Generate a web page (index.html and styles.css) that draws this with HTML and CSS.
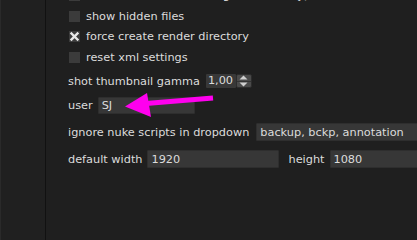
FILE: index.html
```html
<!DOCTYPE html>
<html>
<head>
<meta charset="utf-8">
<link rel="stylesheet" href="styles.css">
</head>
<body>
<div class="window">
  <div class="side"></div>
  <div class="main">
    <div class="row cbrow"><span class="cb"></span><span class="lbl">shot section: enable drag functionality)</span></div>
    <div class="row cbrow"><span class="cb"></span><span class="lbl">show hidden files</span></div>
    <div class="row cbrow"><span class="cb"><svg width="11" height="11" viewBox="0 0 11 11"><path d="M2.5 2.5 L8.5 8.5 M8.5 2.5 L2.5 8.5" stroke="#e8e8e8" stroke-width="2.4" stroke-linecap="square"/></svg></span><span class="lbl">force create render directory</span></div>
    <div class="row cbrow"><span class="cb"></span><span class="lbl">reset xml settings</span></div>
    <div class="row r-gamma"><span class="lbl">shot thumbnail gamma</span>
      <span class="spin"><span class="spinval">1,00</span><span class="spinbtns"><span class="sb"><svg width="9" height="5" viewBox="0 0 9 5"><path d="M4.5 0.5 L8.5 4.5 L0.5 4.5 Z" fill="#cfcfcf"/></svg></span><span class="sb"><svg width="9" height="5" viewBox="0 0 9 5"><path d="M0.5 0.5 L8.5 0.5 L4.5 4.5 Z" fill="#cfcfcf"/></svg></span></span></span>
    </div>
    <div class="row r-user"><span class="lbl">user</span><span class="field f-user">SJ</span></div>
    <div class="row r-ignore"><span class="lbl">ignore nuke scripts in dropdown</span><span class="field f-ignore">backup, bckp, annotation</span></div>
    <div class="row r-width"><span class="lbl">default width</span><span class="field f-width">1920</span><span class="lbl lbl-h">height</span><span class="field f-height">1080</span></div>
  </div>
</div>
<svg class="arrow" width="417" height="240" viewBox="0 0 417 240">
  <path d="M146 103.5 L213 98" stroke="#ff00ee" stroke-width="5" fill="none"/>
  <path d="M125 106.5 L147 93 L151 117 Z" fill="#ff00ee"/>
</svg>
</body>
</html>
```
FILE: styles.css
```css
html, body {
  margin: 0;
  padding: 0;
  background: #1f1f1f;
  overflow: hidden;
}
.window {
  width: 417px;
  height: 240px;
  display: flex;
  font-family: "DejaVu Sans", Verdana, sans-serif;
  font-size: 11.3px;
  color: #dcdcdc;
  overflow: hidden;
}
.side {
  width: 46px;
  flex: none;
  background: #202020;
  border-right: 1px solid #111111;
  border-left: 1px solid #2a2a2a;
  box-sizing: border-box;
}
.main {
  flex: 1;
  display: flex;
  flex-direction: column;
  padding-left: 22px;
  margin-top: -14.5px;
  min-width: 0;
}
.row {
  display: flex;
  align-items: center;
  white-space: nowrap;
  height: 20px;
  flex: none;
}
.cbrow {
  height: 20.5px;
}
.cb {
  width: 11px;
  height: 11px;
  background: #3b3b3b;
  margin: 0 6px 0 1px;
  display: flex;
  flex: none;
}
.lbl {
  line-height: 13px;
}
.r-gamma { margin-top: 3.5px; }
.r-user { margin-top: 4px; }
.r-ignore { margin-top: 7px; }
.r-width { margin-top: 7px; }
.spin {
  display: flex;
  height: 14px;
  margin-left: 6px;
}
.spinval {
  background: #383838;
  width: 30px;
  padding-left: 2px;
  box-sizing: border-box;
  line-height: 14px;
  border-radius: 1px;
}
.spinbtns {
  display: flex;
  flex-direction: column;
  width: 16px;
  background: #4a4a4a;
  border: 1px solid #2c2c2c;
  box-sizing: border-box;
  border-radius: 2px;
}
.sb {
  flex: 1;
  display: flex;
  align-items: center;
  justify-content: center;
}
.sb + .sb {
  border-top: 1px solid #333;
}
.field {
  background: #373737;
  border: 1px solid #2e2e2e;
  box-sizing: border-box;
  padding-left: 3px;
  display: flex;
  align-items: center;
  border-radius: 1px;
  flex: none;
}
.f-user {
  margin-left: 5px;
  width: 97px;
  height: 17px;
}
.f-ignore {
  margin-left: 7px;
  width: 170px;
  height: 18px;
}
.f-width {
  margin-left: 5px;
  width: 132px;
  height: 18px;
}
.lbl-h {
  margin-left: 9px;
}
.f-height {
  margin-left: 5px;
  width: 100px;
  height: 18px;
}
.arrow {
  position: absolute;
  left: 0;
  top: 0;
  pointer-events: none;
}
```
